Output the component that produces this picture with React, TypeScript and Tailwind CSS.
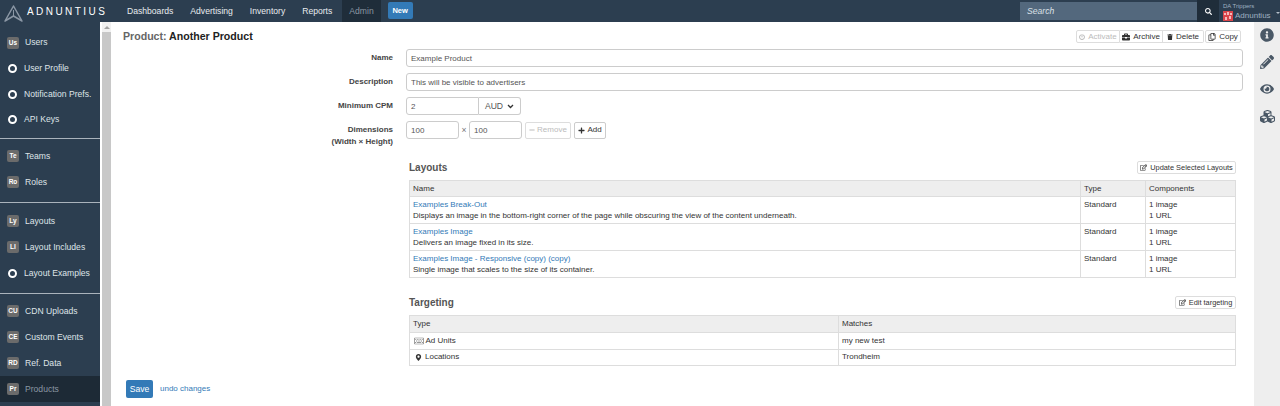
import { FaInfoCircle, FaPencilAlt, FaEye, FaCubes, FaSearch, FaBriefcase, FaTrash, FaRegCopy, FaPowerOff, FaPlus, FaMinus, FaRegEdit, FaMapMarkerAlt, FaRegKeyboard } from "react-icons/fa";
import type { ReactNode } from "react";

type NavItem = { badge?: string; label: string; active?: boolean };

const groups: NavItem[][] = [
  [{ badge: "Us", label: "Users" }, { label: "User Profile" }, { label: "Notification Prefs." }, { label: "API Keys" }],
  [{ badge: "Te", label: "Teams" }, { badge: "Ro", label: "Roles" }],
  [{ badge: "Ly", label: "Layouts" }, { badge: "LI", label: "Layout Includes" }, { label: "Layout Examples" }],
  [{ badge: "CU", label: "CDN Uploads" }, { badge: "CE", label: "Custom Events" }, { badge: "RD", label: "Ref. Data" }, { badge: "Pr", label: "Products", active: true }],
];

const groupCls = [
  "",
  "mt-[5.5px] border-t border-[#aab3bc] pt-[4px]",
  "mt-[7px] border-t border-[#aab3bc] pt-[5px]",
  "mt-[7px] border-t border-[#aab3bc] pt-[4px]",
];

const layouts = [
  { name: "Examples Break-Out", text: "Displays an image in the bottom-right corner of the page while obscuring the view of the content underneath." },
  { name: "Examples Image", text: "Delivers an image fixed in its size." },
  { name: "Examples Image - Responsive (copy) (copy)", text: "Single image that scales to the size of its container." },
];

const Logo = () => (
  <svg width="19" height="17" viewBox="0 0 19 17" className="mt-[4px] shrink-0">
    <path d="M9.5 1 L18 16 L9.5 11 L1 16 Z" fill="none" stroke="#8b97a5" strokeWidth="1.5" strokeLinejoin="round" />
    <path d="M9.5 5 L9.5 11" stroke="#8b97a5" strokeWidth="1" />
  </svg>
);

const Flag = () => (
  <svg width="10" height="10" viewBox="0 0 10 10" className="shrink-0">
    <rect width="10" height="10" fill="#d9454b" />
    <path d="M1 2h2v2H1zM4 1h2v3H4zM7 2h2v2H7zM2 6h2v3H2zM6 5h2v3H6z" fill="#f3b9bb" />
  </svg>
);

const Field = ({ label, sub, children }: { label: string; sub?: string; children: ReactNode }) => (
  <div className="flex items-start">
    <div className="w-[270px] shrink-0 pt-[3px] text-right text-[8px] font-bold leading-[12px] text-[#444]">
      {label}
      {sub && <div>{sub}</div>}
    </div>
    <div className="ml-[13px] flex flex-1 items-center">{children}</div>
  </div>
);

const Btn = ({ icon, children, className = "" }: { icon: ReactNode; children: ReactNode; className?: string }) => (
  <button className={`flex items-center justify-center gap-[3px] rounded-[2px] border border-[#ddd] bg-white text-[#333] ${className}`}>
    {icon}
    {children}
  </button>
);

const inputCls = "rounded-[3px] border border-[#ccc] bg-white px-[4px] text-[#555] text-[8px] outline-none";

export default function App() {
  return (
    <div className="flex h-[406px] w-[1280px] flex-col overflow-hidden bg-white font-['Liberation_Sans',Arial,sans-serif] text-[8.6px] text-[#333]">
      <header className="flex h-[22px] shrink-0 items-stretch bg-[#2c3e50]">
        <div className="flex w-[127px] items-center pl-[4px]">
          <Logo />
          <span className="ml-[4px] mt-[1px] text-[10px] tracking-[2.44px] text-white">ADNUNTIUS</span>
        </div>
        <nav className="flex items-stretch text-[#e8ecef]">
          <a className="flex items-center pr-[17px]">Dashboards</a>
          <a className="flex items-center pr-[17px]">Advertising</a>
          <a className="flex items-center pr-[17px]">Inventory</a>
          <a className="flex items-center pr-[10px]">Reports</a>
          <a className="flex items-center bg-[#1f2d3a] px-[7px] text-[#8a97a3]">Admin</a>
        </nav>
        <div className="ml-[7px] flex items-center pb-[1px]">
          <button className="h-[17px] w-[25px] rounded-[2px] bg-[#337ab7] text-[7.5px] font-bold text-white">New</button>
        </div>
        <div className="ml-auto flex items-stretch">
          <div className="my-[2px] flex w-[177px] items-center bg-[#53687d] pl-[7px] italic text-[#dbe1e7]">Search</div>
          <div className="flex w-[22px] items-center justify-center bg-[#1f2d3a] text-white">
            <FaSearch size={7} />
          </div>
          <div className="flex w-[61px] flex-col justify-center pl-[4px] leading-[9px] text-[#9fb0c0]">
            <span className="text-[6px]">DA Trippers</span>
            <span className="flex items-center gap-[2px] text-[8px]">
              <Flag />
              Adnuntius
              <span className="ml-[3px] -mt-[6px] border-x-[2px] border-t-[2px] border-x-transparent border-t-[#b5bfc9]" />
            </span>
          </div>
        </div>
      </header>

      <div className="flex min-h-0 flex-1">
        <aside className="w-[100px] shrink-0 bg-[#2c3e50] pt-[8px] text-[#dfe4e8]">
          {groups.map((group, i) => (
            <div key={i} className={groupCls[i]}>
              {group.map((item) => (
                <div key={item.label} className={`flex items-center pl-[7px] ${i === 0 ? "h-[25.7px]" : "h-[26px]"} ${item.active ? "bg-[#1d2a36] text-[#8a97a3]" : ""}`}>
                  {item.badge ? (
                    <span className="flex h-[12px] w-[12px] items-center justify-center rounded-[2px] bg-[#6b6b6b] text-[6.5px] font-bold text-white">{item.badge}</span>
                  ) : (
                    <span className="ml-[1px] h-[9px] w-[9px] rounded-full border-2 border-white" />
                  )}
                  <span className={item.badge ? "ml-[6px]" : "ml-[7px]"}>{item.label}</span>
                </div>
              ))}
            </div>
          ))}
        </aside>

        <div className="ml-[2px] flex w-[9px] shrink-0 flex-col bg-[#c8c8c8]">
          <div className="flex h-[10px] items-center justify-center bg-[#f1f1f1]">
            <span className="border-x-[3px] border-b-[3px] border-x-transparent border-b-[#a3a3a3]" />
          </div>
        </div>

        <main className="relative flex min-w-0 flex-1 flex-col pl-[12px] pr-[11px]">
          <div className="flex h-[27px] shrink-0 items-center justify-between pt-[2px]">
            <h1 className="text-[10.6px] font-bold text-[#666]">
              Product: <span className="text-[#222]">Another Product</span>
            </h1>
            <div className="mr-[2px] flex items-center gap-[1px] text-[8px]">
              <div className="flex h-[13px] items-stretch">
                <Btn icon={<FaPowerOff size={6} className="text-[#bbb]" />} className="w-[44px] rounded-r-none"><span className="text-[#bbb]">Activate</span></Btn>
                <Btn icon={<FaBriefcase size={8} />} className="w-[43px] rounded-none border-l-0">Archive</Btn>
                <Btn icon={<FaTrash size={6} />} className="w-[41px] rounded-l-none border-l-0">Delete</Btn>
              </div>
              <Btn icon={<FaRegCopy size={8} />} className="h-[13px] w-[36px]">Copy</Btn>
            </div>
          </div>

          <div className="flex shrink-0 flex-col gap-[6px]">
            <Field label="Name">
              <input readOnly value="Example Product" className={`${inputCls} h-[18px] w-full`} />
            </Field>
            <Field label="Description">
              <input readOnly value="This will be visible to advertisers" className={`${inputCls} h-[18px] w-full`} />
            </Field>
            <Field label="Minimum CPM">
              <input readOnly value="2" className={`${inputCls} h-[18px] w-[73px] rounded-r-none`} />
              <div className="flex h-[18px] w-[42px] items-center justify-center gap-[4px] rounded-r-[3px] border border-l-0 border-[#ccc] text-[#555]">
                AUD
                <svg width="7" height="5" viewBox="0 0 7 5"><path d="M1 1l2.5 2.5L6 1" fill="none" stroke="#333" strokeWidth="1.3" /></svg>
              </div>
            </Field>
            <Field label="Dimensions" sub="(Width × Height)">
              <input readOnly value="100" className={`${inputCls} h-[18px] w-[53px]`} />
              <span className="w-[10px] text-center text-[#777]">×</span>
              <input readOnly value="100" className={`${inputCls} h-[18px] w-[53px]`} />
              <div className="ml-[3px] flex h-[17px] w-[46px] items-center justify-center gap-[2px] rounded-[2px] border border-[#ddd] text-[8px] text-[#bbb]"><FaMinus size={6} />Remove</div>
              <div className="ml-[3px] flex h-[17px] w-[32px] items-center justify-center gap-[2px] rounded-[2px] border border-[#ccc] text-[8px]"><FaPlus size={7} />Add</div>
            </Field>
          </div>

          <section className="ml-[286px] mr-[7px] mt-[7px] shrink-0">
            <div className="flex h-[25px] items-center justify-between">
              <h2 className="text-[10px] font-bold text-[#555]">Layouts</h2>
              <Btn icon={<FaRegEdit size={7} />} className="h-[13px] w-[99px] text-[7.4px]">Update Selected Layouts</Btn>
            </div>
            <table className="w-full border-collapse border border-[#ddd] text-[8px] leading-[11px]">
              <thead>
                <tr className="h-[16px] bg-[#eee] text-left">
                  <th className="pl-[3px] font-normal">Name</th>
                  <th className="w-[65px] border-l border-[#ddd] pl-[3px] font-normal">Type</th>
                  <th className="w-[90px] border-l border-[#ddd] pl-[3px] font-normal">Components</th>
                </tr>
              </thead>
              <tbody>
                {layouts.map((row) => (
                  <tr key={row.name} className="h-[27px] border-t border-[#ddd] align-top">
                    <td className="pl-[3px] pt-[2px]">
                      <div className="text-[#337ab7]">{row.name}</div>
                      <div>{row.text}</div>
                    </td>
                    <td className="border-l border-[#ddd] pl-[3px] pt-[2px]">Standard</td>
                    <td className="border-l border-[#ddd] pl-[3px] pt-[2px]">
                      <div>1 image</div>
                      <div>1 URL</div>
                    </td>
                  </tr>
                ))}
              </tbody>
            </table>
          </section>

          <section className="ml-[286px] mr-[7px] mt-[12px] shrink-0">
            <div className="flex h-[25px] items-center justify-between">
              <h2 className="text-[10px] font-bold text-[#555]">Targeting</h2>
              <Btn icon={<FaRegEdit size={7} />} className="h-[13px] w-[61px] text-[7.4px]">Edit targeting</Btn>
            </div>
            <table className="w-full border-collapse border border-[#ddd] text-[8px]">
              <thead>
                <tr className="h-[17px] bg-[#eee] text-left">
                  <th className="w-[429px] pl-[3px] font-normal">Type</th>
                  <th className="border-l border-[#ddd] pl-[3px] font-normal">Matches</th>
                </tr>
              </thead>
              <tbody>
                <tr className="h-[16.5px] border-t border-[#ddd]">
                  <td className="pl-[4px]"><span className="flex items-center gap-[1.5px]"><FaRegKeyboard size={10} className="text-[#777]" />Ad Units</span></td>
                  <td className="border-l border-[#ddd] pl-[3px]">my new test</td>
                </tr>
                <tr className="h-[16.5px] border-t border-[#ddd]">
                  <td className="pl-[5px]"><span className="flex items-center gap-[3px]"><FaMapMarkerAlt size={7} />Locations</span></td>
                  <td className="border-l border-[#ddd] pl-[3px]">Trondheim</td>
                </tr>
              </tbody>
            </table>
          </section>

          <div className="mt-[14px] flex shrink-0 items-center gap-[7px] pl-[3px]">
            <button className="h-[18px] w-[27px] rounded-[2px] bg-[#337ab7] text-white">Save</button>
            <a className="text-[8px] text-[#337ab7]">undo changes</a>
          </div>
        </main>

        <aside className="flex w-[26px] shrink-0 flex-col items-center gap-[13px] bg-[#eee] pt-[6px] text-[#4a5866]">
          <FaInfoCircle size={14} />
          <FaPencilAlt size={14} />
          <FaEye size={14} />
          <FaCubes size={15} />
        </aside>
      </div>
    </div>
  );
}
